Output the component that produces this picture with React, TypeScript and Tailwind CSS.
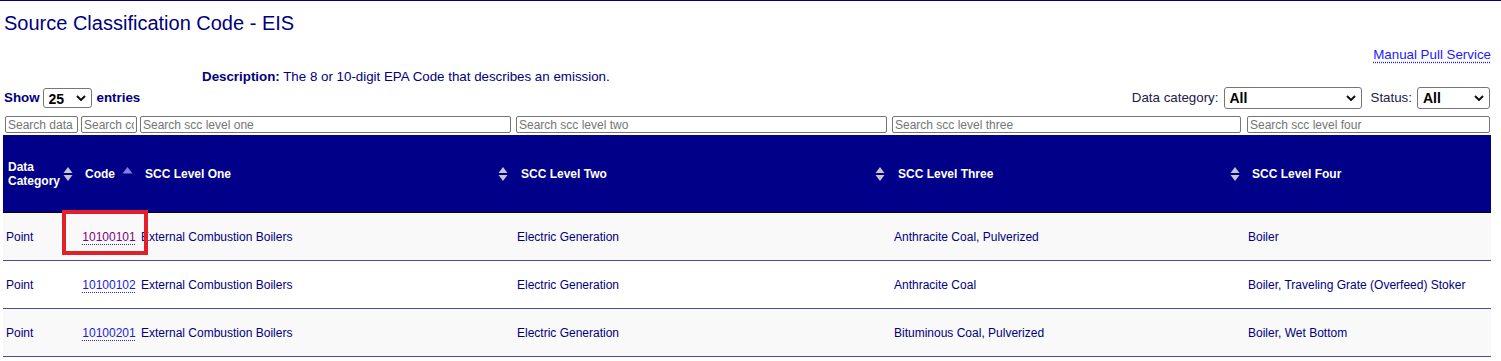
import { ChangeEvent, useState } from 'react';

type SccRow = {
  category: string;
  code: string;
  levelOne: string;
  levelTwo: string;
  levelThree: string;
  levelFour: string;
  visited?: boolean;
};

const rows: SccRow[] = [
  {
    category: 'Point',
    code: '10100101',
    levelOne: 'External Combustion Boilers',
    levelTwo: 'Electric Generation',
    levelThree: 'Anthracite Coal, Pulverized',
    levelFour: 'Boiler',
    visited: true,
  },
  {
    category: 'Point',
    code: '10100102',
    levelOne: 'External Combustion Boilers',
    levelTwo: 'Electric Generation',
    levelThree: 'Anthracite Coal',
    levelFour: 'Boiler, Traveling Grate (Overfeed) Stoker',
  },
  {
    category: 'Point',
    code: '10100201',
    levelOne: 'External Combustion Boilers',
    levelTwo: 'Electric Generation',
    levelThree: 'Bituminous Coal, Pulverized',
    levelFour: 'Boiler, Wet Bottom',
  },
];

const cols = 'grid grid-cols-[75px_62px_376px_376px_355px_244px]';

function SortBoth() {
  return (
    <svg width="10" height="16" viewBox="0 0 10 16" className="shrink-0">
      <path d="M5 1 L9.5 7 L0.5 7 Z" fill="#c4c4d4" />
      <path d="M5 15 L9.5 9 L0.5 9 Z" fill="#c4c4d4" />
    </svg>
  );
}

function SortAsc() {
  return (
    <svg width="11" height="16" viewBox="0 0 11 16" className="shrink-0">
      <path d="M5.5 1 L10.5 7.5 L0.5 7.5 Z" fill="#7f7fe0" />
    </svg>
  );
}

function Chevron() {
  return (
    <svg width="10" height="6" viewBox="0 0 10 6" className="pointer-events-none absolute right-[6px] top-1/2 -translate-y-1/2">
      <path d="M1 1 L5 5 L9 1" fill="none" stroke="#111" strokeWidth="2" />
    </svg>
  );
}

function Dropdown({ value, options, width, height, onChange }: {
  value: string;
  options: string[];
  width: string;
  height: string;
  onChange: (v: string) => void;
}) {
  return (
    <div className={`relative ${width} ${height}`}>
      <select
        value={value}
        onChange={(e: ChangeEvent<HTMLSelectElement>) => onChange(e.target.value)}
        className="h-full w-full appearance-none rounded-[3px] border border-[#767676] bg-white pl-[5px] text-[14px] font-bold text-black outline-none"
      >
        {options.map((o) => (
          <option key={o}>{o}</option>
        ))}
      </select>
      <Chevron />
    </div>
  );
}

function Search({ placeholder, width }: { placeholder: string; width: string }) {
  return (
    <input
      placeholder={placeholder}
      className={`${width} h-[17px] rounded-[2px] border border-[#767676] bg-white px-[2px] text-[12px] text-black outline-none placeholder:text-[#757575]`}
    />
  );
}

export default function App() {
  const [pageSize, setPageSize] = useState('25');
  const [category, setCategory] = useState('All');
  const [status, setStatus] = useState('All');

  return (
    <div className="min-h-screen border-t border-[#000080] bg-white font-['Liberation_Sans',Arial,sans-serif] text-[#000080]">
      <div className="ml-[3px] w-[1488px]">
        <h1 className="mt-[10px] pl-[1px] text-[20px] leading-[24px]">Source Classification Code - EIS</h1>

        <div className="mt-[12px] flex justify-end text-[13.33px] leading-[16px]">
          <a href="#" className="text-[#1a1aff] underline decoration-dotted underline-offset-[3px]">
            Manual Pull Service
          </a>
        </div>

        <p className="mt-[6px] pl-[199px] text-[13.33px] leading-[16px]">
          <b>Description:</b> The 8 or 10-digit EPA Code that describes an emission.
        </p>

        <div className="mt-[2px] flex h-[22px] items-center text-[13.33px]">
          <div className="flex items-center pl-[1px] font-bold">
            <span>Show</span>
            <div className="ml-[3px] mr-[5px]">
              <Dropdown value={pageSize} options={['10', '25', '50', '100']} width="w-[49px]" height="h-[20px]" onChange={setPageSize} />
            </div>
            <span>entries</span>
          </div>
          <div className="ml-auto flex items-center text-[#202048]">
            <span>Data category:</span>
            <div className="ml-[5px] mr-[9px]">
              <Dropdown value={category} options={['All', 'Point', 'Nonpoint', 'Onroad', 'Nonroad']} width="w-[138px]" height="h-[22px]" onChange={setCategory} />
            </div>
            <span>Status:</span>
            <div className="ml-[5px] mr-[1px]">
              <Dropdown value={status} options={['All', 'Active', 'Retired']} width="w-[73px]" height="h-[22px]" onChange={setStatus} />
            </div>
          </div>
        </div>

        <div className="mt-[6px] flex h-[17px] items-center">
          <div className="ml-[2px]"><Search placeholder="Search data category" width="w-[73px]" /></div>
          <div className="ml-[3px]"><Search placeholder="Search code" width="w-[56px]" /></div>
          <div className="ml-[3px]"><Search placeholder="Search scc level one" width="w-[371px]" /></div>
          <div className="ml-[5px]"><Search placeholder="Search scc level two" width="w-[371px]" /></div>
          <div className="ml-[5px]"><Search placeholder="Search scc level three" width="w-[349px]" /></div>
          <div className="ml-[6px]"><Search placeholder="Search scc level four" width="w-[243px]" /></div>
        </div>

        <div className="relative mt-[3px]">
          <div className={`${cols} h-[78px] items-center border-b border-black bg-[#000088] text-[12px] font-bold leading-[14px] text-white`}>
            <div className="flex items-center justify-between pl-[5px] pr-[5px]">
              <span>Data<br />Category</span>
              <SortBoth />
            </div>
            <div className="flex items-center justify-between pl-[7px] pr-[7px]">
              <span>Code</span>
              <SortAsc />
            </div>
            <div className="flex items-center justify-between pl-[5px] pr-[8px]">
              <span>SCC Level One</span>
              <SortBoth />
            </div>
            <div className="flex items-center justify-between pl-[5px] pr-[7px]">
              <span>SCC Level Two</span>
              <SortBoth />
            </div>
            <div className="flex items-center justify-between pl-[6px] pr-[7px]">
              <span>SCC Level Three</span>
              <SortBoth />
            </div>
            <div className="flex items-center pl-[5px]">
              <span>SCC Level Four</span>
            </div>
          </div>

          {rows.map((r, i) => (
            <div
              key={r.code}
              className={`${cols} h-[48px] items-center border-b border-[#4a4a9a] text-[12px] ${i % 2 === 0 ? 'bg-[#f9f9f9]' : 'bg-white'}`}
            >
              <div className="pl-[3px]">{r.category}</div>
              <div className="text-center">
                <a
                  href="#"
                  className={`underline decoration-dotted underline-offset-[3px] ${r.visited ? 'text-[#800080] decoration-[#3030a0]' : 'text-[#1a1ae6] decoration-[#3030a0]'}`}
                >
                  {r.code}
                </a>
              </div>
              <div className="pl-[1px]">{r.levelOne}</div>
              <div className="pl-[1px]">{r.levelTwo}</div>
              <div className="pl-[2px]">{r.levelThree}</div>
              <div className="pl-[1px]">{r.levelFour}</div>
            </div>
          ))}

          {/* highlight around the first code */}
          <div className="pointer-events-none absolute left-[59px] top-[75px] h-[45px] w-[86px] border-[4px] border-[#e3202a]" />
        </div>
      </div>
    </div>
  );
}
